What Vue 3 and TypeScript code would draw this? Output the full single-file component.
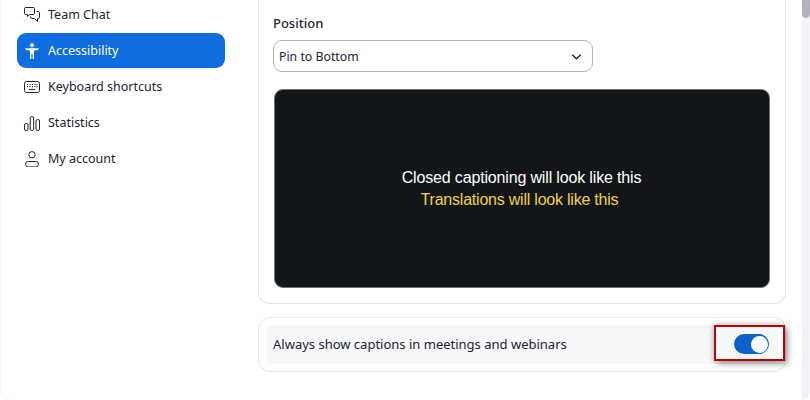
<script setup lang="ts">
const items = [
  { label: 'Team Chat', icon: 'chat' },
  { label: 'Accessibility', icon: 'access', active: true },
  { label: 'Keyboard shortcuts', icon: 'keyboard' },
  { label: 'Statistics', icon: 'stats' },
  { label: 'My account', icon: 'user' },
]
</script>

<template>
  <div class="window">
    <nav class="sidebar">
      <div v-for="item in items" :key="item.label" class="nav-item" :class="{ active: item.active }">
        <svg class="nav-icon" width="16" height="16" viewBox="0 0 16 16" fill="none" stroke="currentColor" stroke-width="1">
          <template v-if="item.icon === 'chat'">
            <path d="M1.800.500h7.400a1.300 1.300 0 0 1 1.300 1.300v4.400a1.300 1.300 0 0 1-1.300 1.300H5.500L3.500 9.500V7.500H1.800A1.300 1.300 0 0 1 .5 6.200V1.800A1.300 1.300 0 0 1 1.800.5z" />
            <path d="M12.500 4.500h1.700a1.300 1.300 0 0 1 1.300 1.300v4.400a1.300 1.300 0 0 1-1.300 1.300h-.7v3l-3-3H7.800a1.300 1.300 0 0 1-1.300-1.300V9.500" />
          </template>
          <template v-else-if="item.icon === 'access'">
            <circle cx="8" cy="2.300" r="2" fill="currentColor" stroke="none" />
            <path d="M1.500 5.300h13v1.500l-4.500.9V16H8.600v-5H7.400v5H6V7.700L1.500 6.800z" fill="currentColor" stroke="none" />
          </template>
          <template v-else-if="item.icon === 'keyboard'">
            <rect x=".5" y="2.500" width="15" height="11" rx="2" />
            <path d="M3 5.500h1M5.500 5.500h1M8 5.500h1M10.500 5.500h1M12.500 5.500h1M3 7.700h1M5.500 7.700h1M8 7.700h1M10.500 7.700h1M12.500 7.700h1M5 10.500h6" stroke-width="1.200" />
          </template>
          <template v-else-if="item.icon === 'stats'">
            <rect x=".5" y="8.500" width="3.500" height="7" rx="1.500" />
            <rect x="6.200" y="1.500" width="3.500" height="14" rx="1.500" />
            <rect x="12" y="4.500" width="3.500" height="11" rx="1.500" />
          </template>
          <template v-else>
            <circle cx="8" cy="3.800" r="3.200" />
            <rect x="1.500" y="10.500" width="13" height="5.500" rx="2.750" />
          </template>
        </svg>
        <span class="nav-label">{{ item.label }}</span>
      </div>
    </nav>

    <main class="content">
      <section class="card preview-card">
        <h3 class="label">Position</h3>
        <div class="select">
          <span>Pin to Bottom</span>
          <svg width="11" height="11" viewBox="0 0 12 12" fill="none" stroke="#232333" stroke-width="1.500">
            <path d="M1.500 4l4.500 4.500L10.500 4" />
          </svg>
        </div>
        <div class="preview">
          <p class="caption">Closed captioning will look like this</p>
          <p class="caption translated">Translations will look like this</p>
        </div>
      </section>

      <section class="card toggle-card">
        <div class="toggle-row">
          <span class="toggle-text">Always show captions in meetings and webinars</span>
          <div class="highlight">
            <span class="switch"><span class="knob"></span></span>
          </div>
        </div>
      </section>
    </main>

    <div class="scrollbar"><div class="thumb"></div></div>
  </div>
</template>

<style scoped>
.window {
  width: 810px;
  height: 400px;
  display: flex;
  overflow: hidden;
  background: #fff;
  border-radius: 0 0 10px 10px;
  box-shadow: inset 1px 0 0 #f4f4f4;
  font-family: "Noto Sans", "Open Sans", sans-serif;
  font-size: 13px;
  color: #232333;
}
.sidebar {
  width: 258px;
  flex: none;
  box-sizing: border-box;
  padding: 0 33px 0 17px;
  margin-top: -3px;
  display: flex;
  flex-direction: column;
  gap: 1px;
}
.nav-item {
  height: 35px;
  flex: none;
  display: flex;
  align-items: center;
  gap: 8px;
  padding-left: 7px;
  border-radius: 9px;
  font-size: 12.5px;
  line-height: 18px;
}
.nav-item.active {
  background: #0e6ee0;
  color: #fff;
}
.nav-icon {
  flex: none;
}
.content {
  width: 528px;
  flex: none;
  display: flex;
  flex-direction: column;
  gap: 13px;
}
.card {
  box-sizing: border-box;
  border: 1px solid #e6e6ea;
  border-radius: 12px;
}
.preview-card {
  height: 305px;
  margin-top: -1px;
  border-top: none;
  border-radius: 0 0 12px 12px;
  padding: 15px 14px 14px;
}
.label {
  margin: 0;
  font-size: 13px;
  font-weight: 500;
  line-height: 18px;
}
.select {
  box-sizing: border-box;
  width: 320px;
  height: 32px;
  margin-top: 8px;
  padding: 0 10px 0 5px;
  display: flex;
  align-items: center;
  justify-content: space-between;
  border: 1px solid #b5b0c8;
  border-radius: 9px;
  font-size: 12.3px;
}
.preview {
  box-sizing: border-box;
  width: 496px;
  height: 199px;
  margin: 17px 0 0 1px;
  display: flex;
  flex-direction: column;
  align-items: center;
  justify-content: center;
  background: #131619;
  border: 1px solid #6f7278;
  border-radius: 9px;
}
.caption {
  margin: 0 1px 0 0;
  font-family: "Liberation Sans", Arial, sans-serif;
  font-size: 16px;
  letter-spacing: -0.16px;
  line-height: 22px;
  color: #fff;
}
.translated {
  margin-right: 5px;
  letter-spacing: -0.22px;
  color: #f2d23e;
}
.toggle-card {
  height: 55px;
  padding: 7px;
}
.toggle-row {
  height: 39px;
  padding-left: 7px;
  display: flex;
  align-items: center;
  justify-content: space-between;
  background: #f6f7f9;
  border-radius: 6px;
  position: relative;
}
.toggle-text {
  padding-bottom: 2px;
}
.highlight {
  position: absolute;
  right: -7px;
  top: 0;
  box-sizing: border-box;
  width: 71px;
  height: 36px;
  padding: 2px 0 0 4px;
  display: flex;
  align-items: center;
  justify-content: center;
  border: 2px solid #bd0000;
  box-shadow: 3px 3px 6px rgba(0, 0, 0, 0.34), -1px -1px 6px rgba(0, 0, 0, 0.2);
}
.switch {
  width: 35px;
  height: 20px;
  box-sizing: border-box;
  padding: 1.5px;
  display: flex;
  justify-content: flex-end;
  background: #0e62c9;
  border-radius: 10px;
}
.knob {
  width: 17px;
  height: 17px;
  border-radius: 50%;
  background: #fff;
}
.scrollbar {
  position: absolute;
  left: 802px;
  top: 0;
  width: 8px;
  height: 400px;
  background: #f3f2f8;
  border-radius: 0 0 8px 0;
}
.thumb {
  height: 18px;
  background: #b4b2bc;
  border-radius: 0 0 4px 4px;
}
</style>
